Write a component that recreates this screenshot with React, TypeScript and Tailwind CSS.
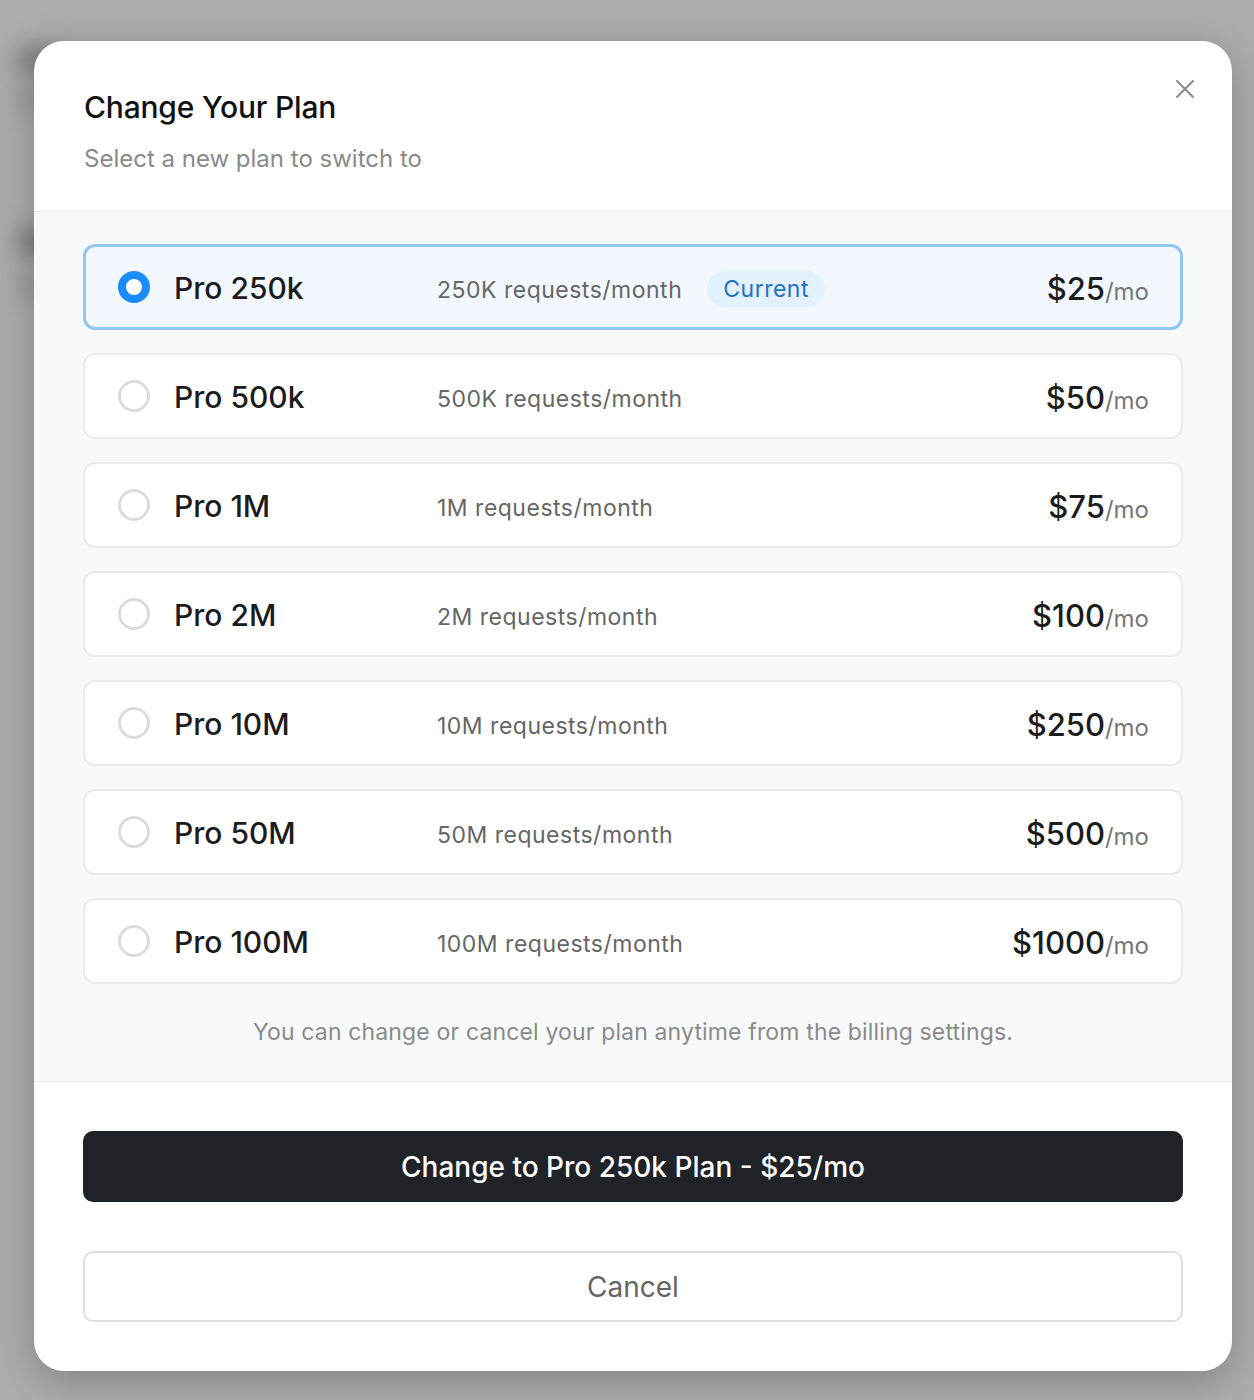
import React from "react";

const plans = [
  { name: "Pro 250k", desc: "250K requests/month", price: "$25", current: true },
  { name: "Pro 500k", desc: "500K requests/month", price: "$50" },
  { name: "Pro 1M", desc: "1M requests/month", price: "$75" },
  { name: "Pro 2M", desc: "2M requests/month", price: "$100" },
  { name: "Pro 10M", desc: "10M requests/month", price: "$250" },
  { name: "Pro 50M", desc: "50M requests/month", price: "$500" },
  { name: "Pro 100M", desc: "100M requests/month", price: "$1000" },
];

export default function App() {
  return (
    <div
      className="relative w-[1254px] h-[1400px] bg-[#adadad] overflow-hidden"
      style={{ fontFamily: "Inter, 'Noto Sans', sans-serif" }}
    >
      <div className="absolute left-[18px] top-[50px] w-[40px] h-[20px] bg-[#6a6a6a] blur-md rounded" />
      <div className="absolute left-[18px] top-[92px] w-[30px] h-[16px] bg-[#8a8a8a] blur-md rounded" />
      <div className="absolute left-[18px] top-[232px] w-[40px] h-[20px] bg-[#6a6a6a] blur-md rounded" />
      <div className="absolute left-[18px] top-[278px] w-[30px] h-[16px] bg-[#8a8a8a] blur-md rounded" />
      <div className="relative pt-[41px] pl-[34px]">
        <div className="w-[1198px] h-[1330px] bg-white rounded-[30px] overflow-hidden flex flex-col shadow-[0_10px_40px_rgba(0,0,0,0.25)]">
          <div className="relative px-[50px] pt-[48px] pb-[36px] border-b border-[#ececec]">
            <h1 className="text-[30px] leading-[36px] font-medium text-[#111] tracking-[-0.2px]">Change Your Plan</h1>
            <p className="mt-[18px] text-[24px] leading-[32px] text-[#8a8a8a]">Select a new plan to switch to</p>
            <button className="absolute right-[35px] top-[36px] w-[24px] h-[24px] flex items-center justify-center text-[#8a8a8a]">
              <svg width="22" height="22" viewBox="0 0 22 22" fill="none" stroke="currentColor" strokeWidth="2" strokeLinecap="round">
                <path d="M3 3L19 19M19 3L3 19" />
              </svg>
            </button>
          </div>
          <div className="bg-[#f8f9fb] px-[49px] pt-[32px] pb-[34px] border-b border-[#ececec]">
            <div className="flex flex-col gap-[23px]">
              {plans.map((p) => (
                <div
                  key={p.name}
                  className={
                    p.current
                      ? "h-[86px] flex items-center rounded-[12px] border-[3px] border-[#93c6f2] bg-[#f3f8fe] pl-[32px] pr-[31px]"
                      : "h-[86px] flex items-center rounded-[12px] border-2 border-[#ebebeb] bg-white pl-[33px] pr-[32px]"
                  }
                >
                  {p.current ? (
                    <div className="w-[32px] h-[32px] rounded-full border-[8px] border-[#1a8cff] bg-white shrink-0" />
                  ) : (
                    <div className="w-[32px] h-[32px] rounded-full border-[3px] border-[#dcdcdc] bg-white shrink-0" />
                  )}
                  <div className="ml-[24px] w-[263px] shrink-0 pt-[2px] text-[30px] leading-[36px] font-medium text-[#1c1c1c]">{p.name}</div>
                  <div className="pt-[5px] text-[23px] leading-[30px] text-[#666] tracking-[0.5px]">{p.desc}</div>
                  {p.current && (
                    <div className="ml-[25px] mt-[4px] h-[36px] px-[16px] rounded-full bg-[#e3f1fd] text-[#1f72c4] text-[23px] leading-[36px] tracking-[0.5px]">
                      Current
                    </div>
                  )}
                  <div className="ml-auto pt-[7px] flex items-baseline">
                    <span className="text-[31px] leading-[36px] font-medium text-[#1c1c1c]">{p.price}</span>
                    <span className="text-[24px] text-[#777]">/mo</span>
                  </div>
                </div>
              ))}
            </div>
            <p className="mt-[33px] text-center text-[23px] leading-[30px] text-[#8a8a8a] tracking-[0.15px]">
              You can change or cancel your plan anytime from the billing settings.
            </p>
          </div>
          <div className="px-[49px] pt-[49px] flex flex-col gap-[49px]">
            <button className="h-[71px] w-full rounded-[10px] bg-[#1f2226] text-white text-[28px] font-medium">
              Change to Pro 250k Plan - $25/mo
            </button>
            <button className="h-[71px] w-full rounded-[10px] border-2 border-[#dedede] bg-white text-[#666] text-[28px]">
              Cancel
            </button>
          </div>
        </div>
      </div>
    </div>
  );
}
